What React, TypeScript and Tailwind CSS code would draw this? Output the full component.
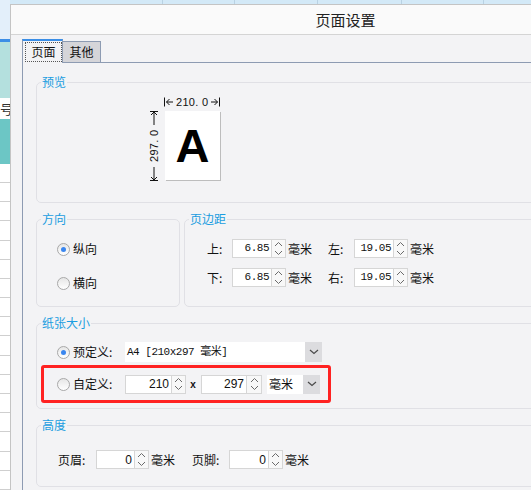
import React from "react";

function Up() {
  return (
    <svg width="9" height="6" viewBox="0 0 9 6">
      <path d="M1 5 L4.5 1.5 L8 5" fill="none" stroke="#6b6b6b" strokeWidth="1" />
    </svg>
  );
}
function Down() {
  return (
    <svg width="9" height="6" viewBox="0 0 9 6">
      <path d="M1 1 L4.5 4.5 L8 1" fill="none" stroke="#6b6b6b" strokeWidth="1" />
    </svg>
  );
}
function Chevron() {
  return (
    <svg width="10" height="6" viewBox="0 0 10 6">
      <path d="M1 1 L5 4.5 L9 1" fill="none" stroke="#4a4a4a" strokeWidth="1.2" />
    </svg>
  );
}

function Spin({ w = "w-[14px]" }: { w?: string }) {
  return (
    <div className={`${w} h-full flex flex-col border-y border-r border-[#d6d6d6] bg-[#f8f8f8]`}>
      <div className="flex-1 flex items-center justify-center"><Up /></div>
      <div className="flex-1 flex items-center justify-center"><Down /></div>
    </div>
  );
}

function Num({ value, w, mono, spinW }: { value: string; w: string; mono?: boolean; spinW?: string }) {
  return (
    <div className="flex h-[19px]">
      <div
        className={`${w} h-full bg-white border border-[#d6d6d6] flex items-center justify-end pr-[2px] text-[#111] ${
          mono
            ? "font-['Liberation_Mono',monospace] text-[11px] tracking-[-0.5px]"
            : "font-['Liberation_Sans',sans-serif] text-[12px]"
        }`}
      >
        {value}
      </div>
      <Spin w={spinW} />
    </div>
  );
}

function Radio({ checked }: { checked?: boolean }) {
  return (
    <span className="w-[13px] h-[13px] rounded-full border border-[#a8a8a8] bg-linear-to-b from-[#e6e6e6] to-white flex items-center justify-center shrink-0">
      {checked && <span className="w-[5px] h-[5px] rounded-full bg-[#3a86ef]" />}
    </span>
  );
}

function Legend({ children }: { children: React.ReactNode }) {
  return (
    <legend className="ml-[4px] px-[1px] text-[12px] leading-[14px] text-[#1a9de0]">{children}</legend>
  );
}

const fs = "border border-[#e0e0e5] rounded-[5px] m-0 p-0 min-w-0";

export default function App() {
  const rows = Array.from({ length: 17 });
  return (
    <div className="relative w-[531px] h-[490px] overflow-hidden flex font-['Noto_Sans_CJK_SC',sans-serif] text-[12px] text-[#111] bg-white">
      {/* spreadsheet background: left strip */}
      <div className="w-[10px] h-full flex flex-col shrink-0">
        <div className="h-[40px] bg-[#e3effa]" />
        <div className="h-[3px] bg-[#3c8ee6]" />
        <div className="h-[57px] bg-[#b4e0de]" />
        <div className="h-[1px] bg-[#6aa8d8]" />
        <div className="h-[21px] bg-white flex items-center justify-end overflow-hidden">
          <span className="text-[13px] leading-[14px] mr-[-3px] text-[#333]">号</span>
        </div>
        <div className="h-[46px] bg-[#6cc6c5]" />
        {rows.map((_, i) => (
          <div key={i} className="h-[19.2px] shrink-0 bg-white border-b border-[#cfcfcf]" />
        ))}
      </div>
      {/* spreadsheet background: top strip */}
      <div className="flex-1 flex flex-col">
        <div className="h-[4px] flex bg-[#d3e9f7]">
          <div className="w-[153px] border-r border-[#b9d2e3]" />
          <div className="w-[72px] border-r border-[#b9d2e3]" />
          <div className="w-[83px] border-r border-[#b9d2e3]" />
          <div className="w-[84px] border-r border-[#b9d2e3]" />
          <div className="w-[82px] border-r border-[#b9d2e3]" />
          <div className="flex-1" />
        </div>
      </div>

      {/* dialog window */}
      <div className="absolute left-[10px] top-[4px] w-[670px] h-[520px] border-l border-t border-[#c4c4c4] bg-[#f3f3f5] flex flex-col">
        <div className="h-[30px] shrink-0 bg-[#fafafa] border-b border-[#d4d4d4] flex items-center justify-center">
          <span className="text-[15px] leading-[16px] text-[#222]">页面设置</span>
        </div>
        <div className="flex-1 pt-[4px] flex flex-col">
          {/* tabs */}
          <div className="flex items-end pl-[11px] h-[24px] shrink-0">
            <div className="w-[41px] h-[24px] border-l border-r border-[#8d9bb2] border-t-2 border-t-[#3a8ee6] bg-[#f3f3f5] pl-[2px] pt-[1px]">
              <div className="w-[37px] h-[20px] border border-dotted border-[#555] flex items-center justify-center">
                <span className="leading-[14px]">页面</span>
              </div>
            </div>
            <div className="w-[38px] h-[22px] border-t border-r border-b border-[#8d9bb2] bg-[#d5d5d9] flex items-center justify-center">
              <span className="leading-[14px]">其他</span>
            </div>
            <div className="flex-1 border-b border-[#8d9bb2]" />
          </div>
          {/* panel */}
          <div className="flex-1 ml-[11px] border-l border-[#8d9bb2] pl-[13px] pt-[12px] pr-[60px] flex flex-col gap-[9px]">
            {/* 预览 */}
            <fieldset className={`${fs} h-[128px]`}>
              <Legend>预览</Legend>
              <div className="ml-[112px] mt-[7px] flex flex-col">
                <div className="ml-[14px] h-[12px] flex items-center font-['Liberation_Sans',sans-serif] text-[11px] leading-[12px] text-[#111]">
                  <svg width="11" height="10" viewBox="0 0 11 10">
                    <path d="M1.5 0.5 V9.5 M3.5 5 H10 M6.5 2 L3.5 5 L6.5 8" fill="none" stroke="#111" strokeWidth="1" />
                  </svg>
                  <span className="mx-[2px] tracking-[0.3px]">210. 0</span>
                  <svg width="11" height="10" viewBox="0 0 11 10">
                    <path d="M9.5 0.5 V9.5 M1 5 H7.5 M4.5 2 L7.5 5 L4.5 8" fill="none" stroke="#111" strokeWidth="1" />
                  </svg>
                </div>
                <div className="flex mt-[3px]">
                  <div className="w-[10px] h-[70px] flex flex-col items-center">
                    <svg width="10" height="14" viewBox="0 0 10 14">
                      <path d="M1 0.5 H9 M5 1 V14 M2 4 L5 1 L8 4" fill="none" stroke="#111" strokeWidth="1" />
                    </svg>
                    <span className="flex-1 flex items-center justify-center [writing-mode:vertical-rl] rotate-180 font-['Liberation_Sans',sans-serif] text-[11px] leading-[10px] tracking-[0.3px]">
                      297. 0
                    </span>
                    <svg width="10" height="14" viewBox="0 0 10 14">
                      <path d="M1 13.5 H9 M5 0 V13 M2 10 L5 13 L8 10" fill="none" stroke="#111" strokeWidth="1" />
                    </svg>
                  </div>
                  <div className="ml-[6px] w-[55px] h-[69px] bg-white shadow-[1px_1px_0_#bdbdbd] flex items-center justify-center">
                    <span className="font-['Liberation_Sans',sans-serif] font-bold text-[47px] leading-[47px] text-black">A</span>
                  </div>
                </div>
              </div>
            </fieldset>

            {/* 方向 + 页边距 */}
            <div className="flex gap-[4px] h-[95px]">
              <fieldset className={`${fs} w-[144px] shrink-0 h-full`}>
                <Legend>方向</Legend>
                <div className="pl-[20px] mt-[16px] flex flex-col gap-[20px]">
                  <div className="flex items-center gap-[3px] h-[14px]">
                    <Radio checked />
                    <span className="leading-[14px]">纵向</span>
                  </div>
                  <div className="flex items-center gap-[3px] h-[14px]">
                    <Radio />
                    <span className="leading-[14px]">横向</span>
                  </div>
                </div>
              </fieldset>
              <fieldset className={`${fs} flex-1 h-full`}>
                <Legend>页边距</Legend>
                <div className="pl-[22px] mt-[13px] flex flex-col gap-[10px]">
                  <div className="flex items-center h-[19px]">
                    <span className="w-[25px] leading-[14px]">上:</span>
                    <Num value="6.85" w="w-[40px]" mono />
                    <span className="ml-[2px] w-[40px] leading-[14px]">毫米</span>
                    <span className="w-[26px] leading-[14px]">左:</span>
                    <Num value="19.05" w="w-[40px]" mono />
                    <span className="ml-[2px] leading-[14px]">毫米</span>
                  </div>
                  <div className="flex items-center h-[19px]">
                    <span className="w-[25px] leading-[14px]">下:</span>
                    <Num value="6.85" w="w-[40px]" mono />
                    <span className="ml-[2px] w-[40px] leading-[14px]">毫米</span>
                    <span className="w-[26px] leading-[14px]">右:</span>
                    <Num value="19.05" w="w-[40px]" mono />
                    <span className="ml-[2px] leading-[14px]">毫米</span>
                  </div>
                </div>
              </fieldset>
            </div>

            {/* 纸张大小 */}
            <fieldset className={`${fs} h-[93px]`}>
              <Legend>纸张大小</Legend>
              <div className="px-[4px] mt-[12px] flex flex-col gap-[3px]">
                <div className="pl-[16px] flex items-center h-[20px]">
                  <Radio checked />
                  <span className="ml-[3px] w-[52px] leading-[14px]">预定义:</span>
                  <div className="flex h-[20px]">
                    <div className="w-[180px] h-full bg-white flex items-center pl-[2px] font-['Liberation_Mono','Noto_Sans_CJK_SC',monospace] text-[11px] tracking-[-0.5px] text-[#111]">
                      A4 [210x297 毫米]
                    </div>
                    <div className="w-[17px] h-full bg-[#dcdcdf] flex items-center justify-center">
                      <Chevron />
                    </div>
                  </div>
                </div>
                <div className="w-[290px] h-[38px] border-[3px] border-[#ff2222] rounded-[3px] pl-[13px] flex items-center">
                  <Radio />
                  <span className="ml-[3px] w-[52px] leading-[14px]">自定义:</span>
                  <Num value="210" w="w-[47px]" />
                  <span className="w-[15px] pl-[4px] font-['Liberation_Mono',monospace] font-bold text-[10px] leading-[10px] mt-[3px]">x</span>
                  <Num value="297" w="w-[46px]" spinW="w-[15px]" />
                  <div className="ml-[5px] flex h-[19px]">
                    <div className="w-[36px] h-full bg-white flex items-center pl-[2px] leading-[14px]">毫米</div>
                    <div className="w-[17px] h-full bg-[#dcdcdf] flex items-center justify-center">
                      <Chevron />
                    </div>
                  </div>
                </div>
              </div>
            </fieldset>

            {/* 高度 */}
            <fieldset className={`${fs} h-[69px]`}>
              <Legend>高度</Legend>
              <div className="pl-[21px] mt-[18px] flex items-center h-[19px]">
                <span className="w-[38px] leading-[14px]">页眉:</span>
                <Num value="0" w="w-[39px]" />
                <span className="ml-[2px] w-[41px] leading-[14px]">毫米</span>
                <span className="w-[37px] leading-[14px]">页脚:</span>
                <Num value="0" w="w-[40px]" />
                <span className="ml-[2px] leading-[14px]">毫米</span>
              </div>
            </fieldset>
          </div>
        </div>
      </div>
    </div>
  );
}
